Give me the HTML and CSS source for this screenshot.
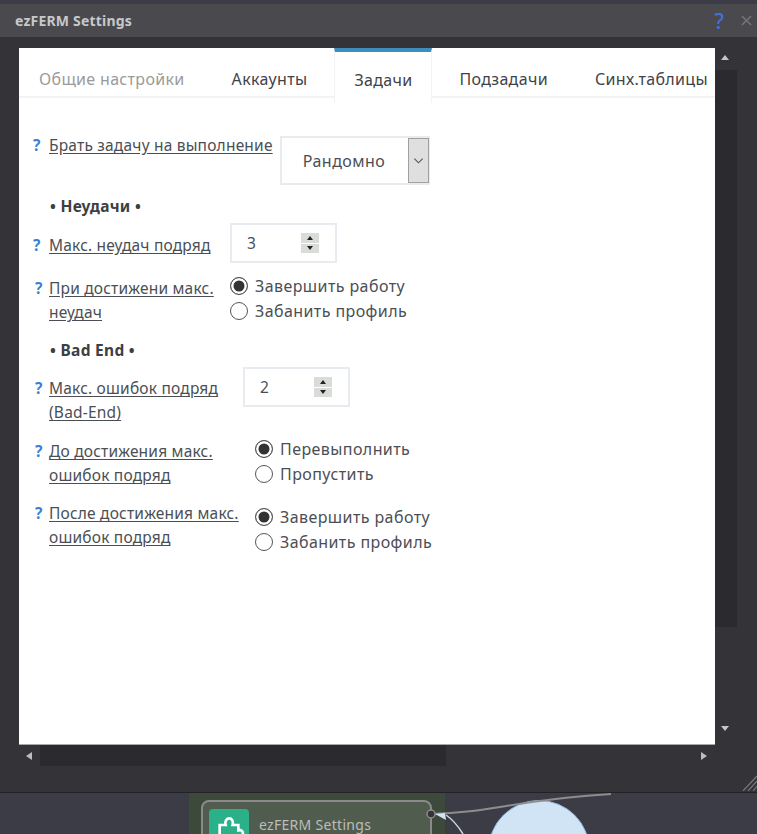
FILE: index.html
```html
<!DOCTYPE html>
<html lang="ru">
<head>
<meta charset="utf-8">
<title>ezFERM Settings</title>
<link rel="stylesheet" href="styles.css">
</head>
<body>
<div class="app">
  <section class="window">
    <header class="titlebar">
      <span class="title">ezFERM Settings</span>
      <span class="help">?</span>
      <svg class="close" viewBox="0 0 12 12"><path d="M1 1l10 10M11 1L1 11"/></svg>
    </header>
    <div class="window-body">
      <div class="viewport">
        <main class="panel">
          <nav class="tabs">
            <span class="tab muted">Общие настройки</span>
            <span class="tab">Аккаунты</span>
            <span class="tab active">Задачи</span>
            <span class="tab">Подзадачи</span>
            <span class="tab">Синх.таблицы</span>
          </nav>
          <div class="form">
            <div class="row row-select">
              <span class="q">?</span>
              <a class="label w-select">Брать задачу на выполнение</a>
              <div class="select">
                <span class="select-value">Рандомно</span>
                <span class="select-btn"><svg viewBox="0 0 12 8"><path d="M1.5 1.5L6 6l4.5-4.5"/></svg></span>
              </div>
            </div>
            <h4 class="heading first">• Неудачи •</h4>
            <div class="row row-input">
              <span class="q">?</span>
              <a class="label w-a">Макс. неудач подряд</a>
              <div class="num"><span class="num-value">3</span><span class="spin"><i class="up"></i><i class="down"></i></span></div>
            </div>
            <div class="row row-radio">
              <span class="q">?</span>
              <a class="label w-a">При достижени макс. неудач</a>
              <div class="radios">
                <span class="radio on">Завершить работу</span>
                <span class="radio">Забанить профиль</span>
              </div>
            </div>
            <h4 class="heading second">• Bad End •</h4>
            <div class="row row-input2">
              <span class="q">?</span>
              <a class="label w-b">Макс. ошибок подряд (Bad-End)</a>
              <div class="num"><span class="num-value">2</span><span class="spin"><i class="up"></i><i class="down"></i></span></div>
            </div>
            <div class="row row-radio2">
              <span class="q">?</span>
              <a class="label w-c">До достижения макс. ошибок подряд</a>
              <div class="radios">
                <span class="radio on">Перевыполнить</span>
                <span class="radio">Пропустить</span>
              </div>
            </div>
            <div class="row row-radio3">
              <span class="q">?</span>
              <a class="label w-c">После достижения макс. ошибок подряд</a>
              <div class="radios">
                <span class="radio on">Завершить работу</span>
                <span class="radio">Забанить профиль</span>
              </div>
            </div>
          </div>
        </main>
        <aside class="vscroll">
          <i class="arrow arrow-up"></i>
          <div class="vtrack"></div>
          <i class="arrow arrow-down"></i>
        </aside>
      </div>
      <div class="hscroll">
        <i class="arrow arrow-left"></i>
        <div class="htrack"></div>
        <i class="arrow arrow-right"></i>
      </div>
      <svg class="grip" viewBox="0 0 14 16"><path d="M0 16L14 1M5 16L14 6M10 16L14 11"/></svg>
    </div>
  </section>
  <section class="canvas">
    <div class="lane"></div>
    <div class="circle"></div>
    <div class="node">
      <span class="node-icon">
        <svg viewBox="0 0 24 24"><path d="M5 9h4.500c-.8-3.200 1-5 2.700-5s3.300 1.800 2.500 5H19v4c2.600-.6 3.500 1 3.500 2.500S21.500 18.600 19 18v4H5z"/></svg>
      </span>
      <span class="node-title">ezFERM Settings</span>
    </div>
    <svg class="wires" viewBox="0 0 757 41">
      <path class="wire" d="M431 21C490 20 520 6 611 1"/>
      <path class="wire light" d="M446 22C452 26 458 33 463 41"/>
      <path class="tip" d="M435 21l10-1 1 7z"/>
      <circle class="port" cx="431" cy="21" r="4"/>
    </svg>
  </section>
</div>
</body>
</html>
```
FILE: styles.css
```css
* { box-sizing: border-box; }
html, body { margin: 0; padding: 0; }
body {
  width: 757px;
  height: 834px;
  overflow: hidden;
  background: #3c3c44;
  font-family: "Noto Sans", "Open Sans", sans-serif;
  color: #4b4f55;
}
.app { display: flex; flex-direction: column; height: 834px; padding-top: 4px; background: #3c3c46; }

.window { height: 789px; display: flex; flex-direction: column; background: #333338; border-bottom: 1px solid #222226; }
.titlebar {
  height: 33px;
  flex: none;
  display: flex;
  align-items: center;
  padding: 0 5px 0 15px;
  background: #49494e;
}
.title { flex: 1; font-size: 14px; font-weight: 700; letter-spacing: 0.2px; color: #c8c8ca; }
.help { font-size: 21px; font-weight: 500; color: #3f74d6; margin-right: 17px; }
.close { width: 11px; height: 11px; fill: none; stroke: #77777b; stroke-width: 1.6; }

.window-body { flex: 1; position: relative; padding: 11px 0 0 19px; background: #333338; }
.viewport { display: flex; height: 697px; }

.panel { width: 696px; height: 697px; flex: none; overflow: hidden; background: #fff; border-bottom: 1px solid #a8a8a8; }
.tabs { display: flex; height: 50px; gap: 7px; border-bottom: 2px solid #f3f3f3; }
.tab {
  padding: 14px 20px 0;
  height: 48px;
  flex: none;
  display: flex;
  align-items: center;
  font-size: 16px;
  letter-spacing: 0.33px;
  color: #3f4348;
  white-space: nowrap;
}
.tab.muted { color: #9a9a9a; }
.tab.active {
  height: 55px;
  padding: 4px 19px 0;
  background: #fff;
  border-top: 4px solid #3c8dbc;
  border-left: 1px solid #f3f3f3;
  border-right: 1px solid #f3f3f3;
}

.form { padding: 38px 0 0 14px; font-size: 15.500px; letter-spacing: 0.2px; line-height: 24px; }
.row { display: flex; align-items: flex-start; }
.q { width: 16px; flex: none; text-align: left; font-weight: 700; color: #3a7fd5; }
.label { display: block; text-decoration: underline; text-underline-offset: 2px; color: #4b4f55; }
.w-select { width: 231px; }
.w-a { width: 181px; }
.w-b { width: 194px; }
.w-c { width: 206px; }

.row-select .q, .row-select .label { margin-top: -3px; }
.row-radio .q, .row-input2 .q, .row-radio2 .q, .row-radio3 .q { padding-left: 2px; }

.select { width: 150px; height: 49px; display: flex; border: 2px solid #e8ebf0; }
.select-value { flex: 1; text-align: center; line-height: 47px; padding-right: 2px; font-size: 16px; letter-spacing: 0.45px; }
.select-btn { width: 21px; flex: none; margin-right: -1px; display: flex; align-items: center; justify-content: center; background: #dfdfdf; border: 1.500px solid #a0a0a0; }
.select-btn svg { width: 11px; height: 8px; fill: none; stroke: #555; stroke-width: 1.200; }

.heading { margin: 0; font-size: 15.500px; font-weight: 700; letter-spacing: 0.3px; line-height: 20px; color: #3c3f44; padding-left: 17px; }
.heading.first { margin-top: 11px; }
.heading.second { margin-top: 16px; }

.row-input { margin-top: 7px; }
.row-input .q, .row-input .label { margin-top: 10px; }
.row-radio { margin-top: 15px; }
.row-radio .q, .row-radio .label { margin-top: -2px; }
.row-input2 { margin-top: 7px; }
.row-input2 .q, .row-input2 .label { margin-top: 9px; }
.row-radio2 { margin-top: 15px; }
.row-radio3 { margin-top: 14px; }

.num { width: 107px; height: 40px; display: flex; align-items: center; padding-left: 15px; border: 2px solid #e8ebf0; }
.num-value { width: 54px; }
.spin { width: 18px; height: 20px; display: flex; flex-direction: column; gap: 1px; }
.spin i { flex: 1; background: #d9dcd9; display: flex; align-items: center; justify-content: center; }
.spin i::after { content: ""; border-left: 3.500px solid transparent; border-right: 3.500px solid transparent; }
.spin .up::after { border-bottom: 4px solid #222; }
.spin .down::after { border-top: 4px solid #222; }

.radios { display: flex; flex-direction: column; margin-top: -4px; gap: 1px; font-size: 16px; letter-spacing: 0.42px; }
.row-radio2 .radios { margin-top: -2px; }
.row-radio3 .radios { margin-top: 4px; }
.radio { display: flex; align-items: center; gap: 7px; white-space: nowrap; }
.radio::before {
  content: "";
  width: 16px;
  height: 16px;
  flex: none;
  border-radius: 50%;
  border: 1.500px solid #555;
  background: #fff;
}
.radio.on::before { background: #333; box-shadow: inset 0 0 0 2.500px #fff; }

.vscroll { width: 22px; display: flex; flex-direction: column; height: 697px; }
.vtrack { height: 557px; margin-top: 10px; background: #2b2b2f; }
.arrow { display: block; width: 0; height: 0; border-style: solid; border-color: transparent; }
.arrow-up { margin: 7px 0 0 6px; border-width: 0 4px 5px; border-bottom-color: #c6c6c6; }
.arrow-down { margin: 99px 0 0 6px; border-width: 5px 4px 0; border-top-color: #c6c6c6; }

.hscroll { display: flex; align-items: center; height: 21px; padding-left: 7px; }
.arrow-left { border-width: 4px 6px 4px 0; border-right-color: #bdbdbd; }
.htrack { width: 406px; height: 21px; margin-left: 8px; background: #2b2b2f; }
.arrow-right { margin-left: 255px; border-width: 4px 0 4px 6px; border-left-color: #bdbdbd; }
.grip { position: absolute; right: 0; bottom: 1px; width: 14px; height: 16px; fill: none; stroke: #77777b; stroke-width: 1.200; }

.canvas { flex: 1; position: relative; overflow: hidden; background: #3c3c46; }
.lane { position: absolute; left: 189px; top: 0; bottom: 0; width: 256px; background: #3d4a3b; }
.circle { position: absolute; left: 488px; top: 7px; width: 102px; height: 102px; border-radius: 50%; background: #d0e4f6; border: 1px solid #8fb6da; }
.node { position: absolute; left: 201px; top: 7px; width: 231px; height: 80px; border: 2px solid #8a8a8a; border-radius: 8px; background: #505c4e; }
.node-icon { position: absolute; left: 6px; top: 7px; width: 40px; height: 40px; border-radius: 4px; background: #2bb18a; display: flex; align-items: center; justify-content: center; }
.node-icon svg { width: 32px; height: 32px; fill: none; stroke: #fff; stroke-width: 2; }
.node-title { position: absolute; left: 56px; top: 13px; font-size: 14px; line-height: 20px; color: #bcbcbc; letter-spacing: 0.3px; white-space: nowrap; }
.wires { position: absolute; left: 0; top: 0; width: 757px; height: 41px; fill: none; }
.wire { stroke: #8d8d8d; stroke-width: 2; }
.wire.light { stroke: #cfd8df; stroke-width: 1.500; }
.tip { fill: #d0e4f6; }
.port { fill: #333338; stroke: #8d8d8d; stroke-width: 1.500; }
```
